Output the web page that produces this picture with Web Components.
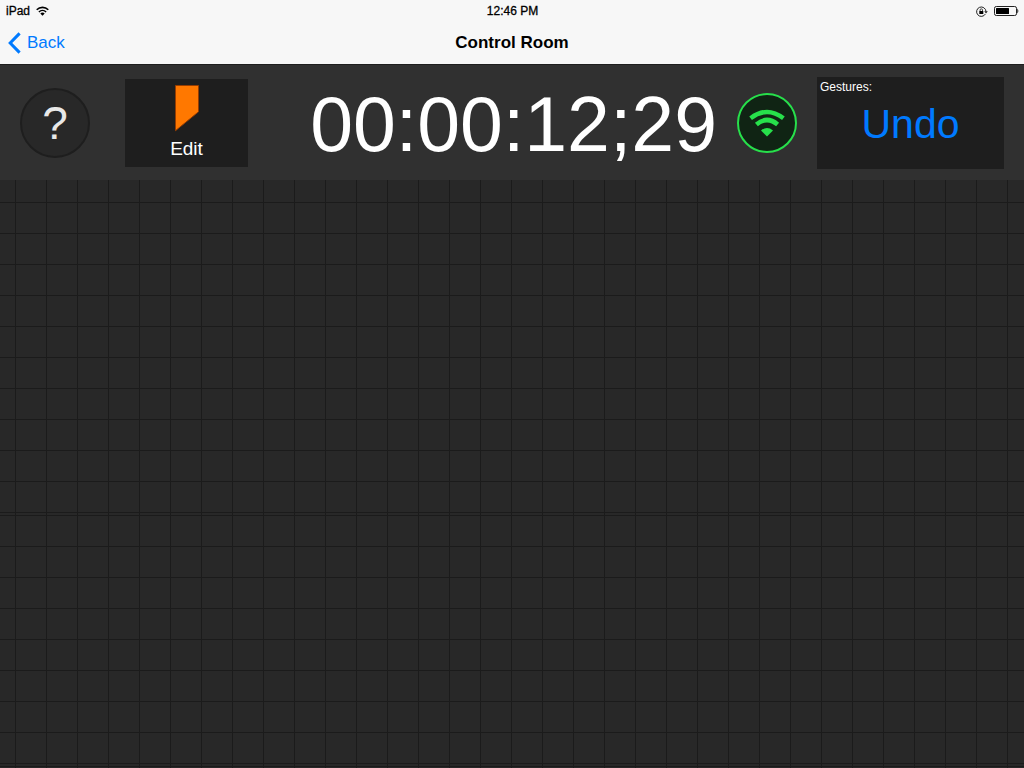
<!DOCTYPE html>
<html lang="en">
<head>
<meta charset="utf-8">
<meta name="viewport" content="width=device-width, initial-scale=1">
<title>Control Room</title>
<style>
html, body { margin: 0; height: 100%; }
body { font-family: "Liberation Sans", Arial, Helvetica, sans-serif; background: #282828; color: #000; }
</style>
</head>
<body>
<control-room></control-room>
<script>
function define(name, html) {
  const template = document.createElement('template');
  template.innerHTML = html;
  customElements.define(name, class extends HTMLElement {
    constructor() {
      super();
      this.attachShadow({ mode: 'open' }).append(template.content.cloneNode(true));
    }
  });
}

define('status-bar', `
<style>
:host { display: grid; grid-template-columns: 1fr auto 1fr; align-items: center; height: 20px; padding: 1px 5px 0 6px; box-sizing: border-box; font-size: 12px; line-height: 20px; -webkit-text-stroke: 0.3px #000; }
.side { display: flex; align-items: center; gap: 6px; }
.end { justify-content: flex-end; }
svg { display: block; }
</style>
<div class="side"><span>iPad</span>
<svg width="13" height="10" viewBox="0 0 13 10" fill="none" stroke="#000" stroke-width="1.6" aria-hidden="true"><path d="M.7 3.7a8.3 8.3 0 0 1 11.6 0"/><path d="M2.9 6a5.2 5.2 0 0 1 7.2 0"/><path d="M6.5 9.7 4.3 7.5a3.1 3.1 0 0 1 4.4 0z" fill="#000" stroke="none"/></svg>
</div>
<span>12:46 PM</span>
<div class="side end">
<svg width="12" height="11" viewBox="0 0 12 11" fill="none" stroke="#222" aria-hidden="true"><path d="M9.4 8A4.7 4.7 0 1 1 10 5.5" stroke-width="1"/><path d="M8.2 5.3h3.6L10 7.6z" fill="#222" stroke="none"/><path d="M3.3 5h4v3h-4z" fill="#000" stroke="none"/><path d="M4.1 5.2V4a1.2 1.2 0 0 1 2.4 0v1.2" stroke-width=".8"/></svg>
<svg width="25" height="10" viewBox="0 0 25 10" aria-hidden="true"><rect x=".5" y=".5" width="22" height="9" rx="1.8" fill="none" stroke="#222"/><rect x="2" y="2" width="13" height="6" rx=".5"/><path d="M23.4 2.6q1.8 2.4 0 4.8z"/></svg>
</div>`);

define('nav-bar', `
<style>
:host { display: grid; grid-template-columns: 1fr auto 1fr; align-items: center; height: 44px; padding: 1px 8px 0; box-sizing: border-box; }
a { display: inline-flex; align-items: center; gap: 6px; justify-self: start; color: #007aff; font-size: 17px; line-height: 24px; text-decoration: none; }
h1 { margin: 0; font-size: 17px; line-height: 24px; font-weight: 700; }
svg { display: block; }
</style>
<a href="#back"><svg width="13" height="22" viewBox="0 0 13 22" fill="none" stroke="currentColor" stroke-width="3" aria-hidden="true"><path d="M11.6 1.4 2.2 11l9.4 9.6"/></svg><span>Back</span></a>
<h1><slot></slot></h1>`);

define('help-button', `
<style>
:host { display: block; }
button { display: grid; place-items: center; width: 70px; height: 70px; padding: 0; border: 2px solid #1e1e1e; border-radius: 50%; background: #282828; color: #e8e8e8; font: 46px/60px "Liberation Sans", Arial, sans-serif; }
</style>
<button aria-label="Help">?</button>`);

define('edit-button', `
<style>
:host { display: block; }
button { display: flex; flex-direction: column; align-items: center; gap: 6px; width: 123px; height: 88px; padding: 6px 0 0; border: 0; background: #1e1e1e; color: #fff; font: 19px/22px "Liberation Sans", Arial, sans-serif; }
svg { display: block; }
</style>
<button><svg width="24" height="47" viewBox="0 0 24 47" aria-hidden="true"><path d="M.5.5h23v26.3L.5 45.7z" fill="#ff7800" stroke="#963c00"/></svg><span><slot></slot></span></button>`);

define('time-code', `
<style>
:host { display: block; padding-top: 2px; color: #fff; font-size: 77px; line-height: 88px; white-space: nowrap; }
</style>
<slot></slot>`);

define('link-status', `
<style>
:host { display: block; }
button { display: block; width: 60px; height: 60px; padding: 0; border: 0; background: none; }
svg { display: block; }
</style>
<button aria-label="Connection"><svg width="60" height="60" viewBox="0 0 60 60" fill="none" stroke="#27e04b" aria-hidden="true"><circle cx="30" cy="30" r="29" fill="#102414" stroke-width="2"/><path d="M13.6 25.2Q30 12.6 46.4 25.2" stroke-width="4.4"/><path d="M19.4 31.4Q30 22.6 40.6 31.4" stroke-width="4.6"/><path d="M30 43.5 24 37.4q6-4.8 12 0z" fill="#27e04b" stroke="none"/></svg></button>`);

define('gesture-pad', `
<style>
:host { display: block; width: 187px; height: 92px; background: #1e1e1e; color: #fff; }
.title { padding: 2px 3px 0; font-size: 12px; line-height: 16px; }
button { display: block; width: 100%; padding: 0; border: 0; background: none; color: #007aff; font: 41px/58px "Liberation Sans", Arial, sans-serif; }
</style>
<div class="title">Gestures:</div>
<button><slot></slot></button>`);

define('tool-bar', `
<style>
:host { display: flex; align-items: center; gap: 20px; min-height: 115px; padding: 0 20px; border-top: 1px solid #1e1e1e; background: #303030; }
.tools { display: flex; align-items: center; gap: 35px; margin-right: auto; }
</style>
<div class="tools"><slot name="tools"></slot></div>
<slot></slot>`);

define('grid-canvas', `
<style>
:host { display: flex; flex-direction: column; gap: 2px; flex: 1; min-height: 0; overflow: hidden; background: repeating-linear-gradient(90deg, transparent 0 15px, #1b1b1b 15px 16px, transparent 16px 31px) #282828; }
.tile { flex: none; height: 249px; background: repeating-linear-gradient(0deg, #1b1b1b 0 1px, transparent 1px 31px); }
.first { height: 333px; }
</style>
<div class="tile first"></div>
<div class="tile"></div>
<div class="tile"></div>`);

define('control-room', `
<style>
:host { display: flex; flex-direction: column; height: 100vh; }
header { background: #f7f7f7; }
</style>
<header><status-bar></status-bar><nav-bar>Control Room</nav-bar></header>
<tool-bar>
<help-button slot="tools"></help-button>
<edit-button slot="tools">Edit</edit-button>
<time-code>00:00:12;29</time-code>
<link-status></link-status>
<gesture-pad>Undo</gesture-pad>
</tool-bar>
<grid-canvas></grid-canvas>`);
</script>
</body>
</html>
